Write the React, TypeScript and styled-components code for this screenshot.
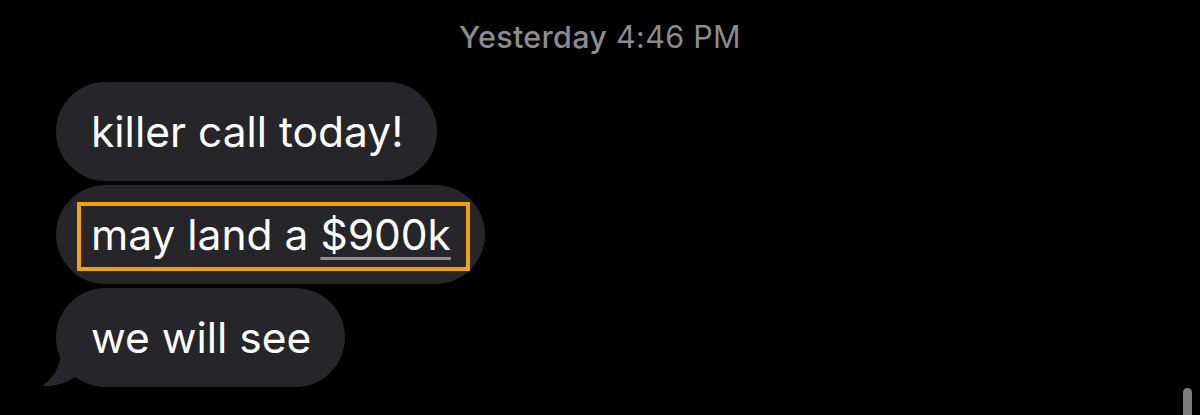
import styled, { createGlobalStyle } from "styled-components";

const GlobalStyle = createGlobalStyle`
  html, body {
    margin: 0;
    padding: 0;
    background: #000;
  }
  body {
    font-family: Inter, "Noto Sans", "Liberation Sans", sans-serif;
    -webkit-font-smoothing: antialiased;
  }
`;

const Screen = styled.div`
  position: relative;
  width: 1200px;
  height: 415px;
  background: #000;
  overflow: hidden;
  display: flex;
  flex-direction: column;
  padding-top: 21px;
  box-sizing: border-box;
`;

const Stamp = styled.div`
  text-align: center;
  color: #8b8b90;
  font-size: 30.5px;
  line-height: 32px;
  letter-spacing: 0.3px;
  margin-bottom: 29px;
`;

const StampDay = styled.span`
  font-weight: 500;
`;

const Thread = styled.div`
  display: flex;
  flex-direction: column;
  align-items: flex-start;
  gap: 4px;
  padding-left: 56px;
`;

const Bubble = styled.div`
  position: relative;
  height: 99px;
  box-sizing: border-box;
  padding: 0 34px 0 35px;
  display: flex;
  align-items: center;
  background: #262529;
  border-radius: 50px;
  color: #fff;
  font-size: 42.5px;
  white-space: nowrap;
`;

const Tail = styled.svg`
  position: absolute;
  left: -14px;
  bottom: 0;
`;

const Highlight = styled.span`
  position: relative;
  &::after {
    content: "";
    position: absolute;
    left: -14px;
    right: -19px;
    top: -7px;
    bottom: -11px;
    border: 4px solid #f0a20e;
  }
`;

const Amount = styled.span`
  text-decoration: underline;
  text-decoration-color: #8d8d92;
  text-decoration-thickness: 3px;
  text-underline-offset: 7px;
`;

const Scroll = styled.div`
  position: absolute;
  left: 1183px;
  top: 388px;
  width: 9px;
  height: 40px;
  border-radius: 5px;
  background: #7c7c7c;
`;

export default function App() {
  return (
    <>
      <GlobalStyle />
      <Screen>
        <Stamp>
          <StampDay>Yesterday</StampDay> 4:46 PM
        </Stamp>
        <Thread>
          <Bubble>killer call today!</Bubble>
          <Bubble>
            <Highlight>
              may land a <Amount>$900k</Amount>
            </Highlight>
          </Bubble>
          <Bubble>
            we will see
            <Tail width="40" height="44" viewBox="0 0 40 44">
              <path
                d="M40 0 L20 0 C20 18 14 34 0 43 C12 44 26 40 34 33 L40 33 Z"
                fill="#262529"
              />
            </Tail>
          </Bubble>
        </Thread>
        <Scroll />
      </Screen>
    </>
  );
}
